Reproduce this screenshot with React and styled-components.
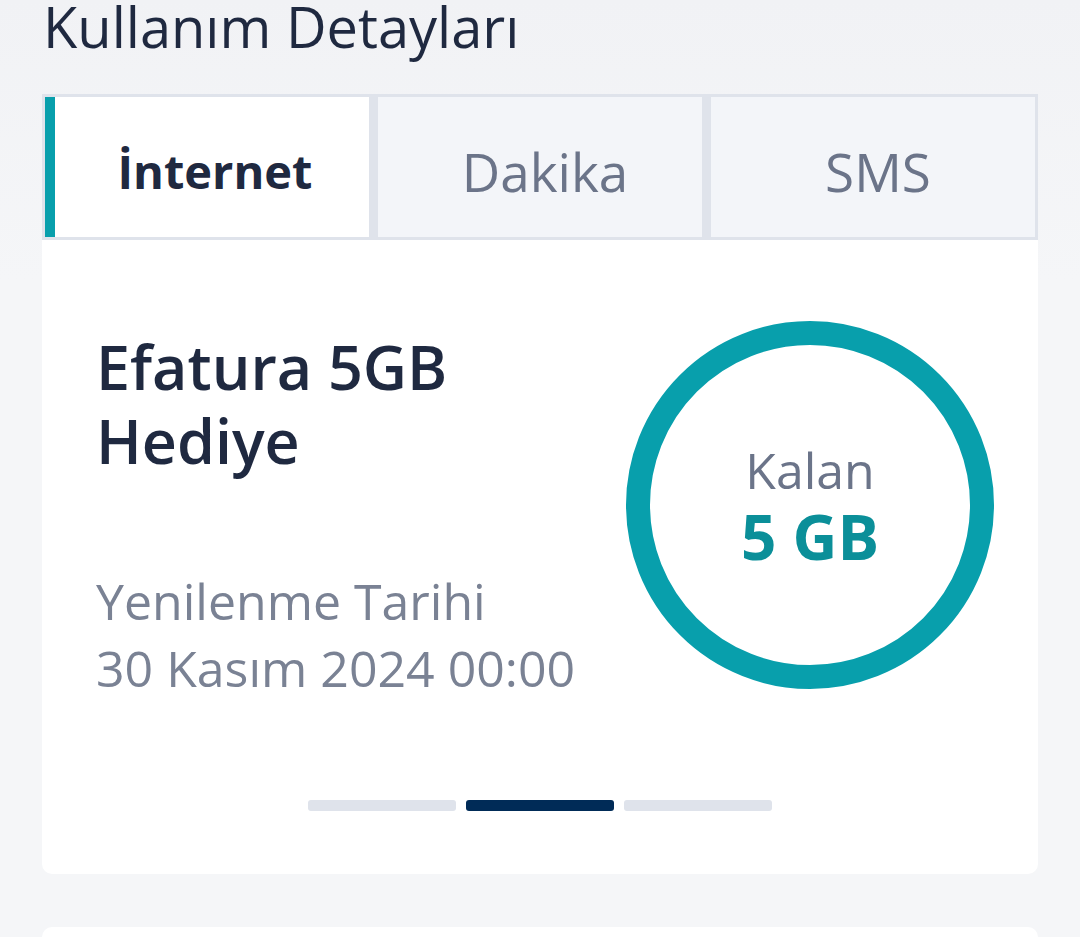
import styled, { createGlobalStyle } from "styled-components"

const GlobalStyle = createGlobalStyle`
  html, body {
    margin: 0;
    padding: 0;
    background: #f5f6f8;
    font-family: "Open Sans", "Noto Sans", sans-serif;
  }
  * { box-sizing: border-box; }
`;

const tabs = ["İnternet", "Dakika", "SMS"];

export default function App() {
    return (
        <>
            <GlobalStyle />
            <Page>
                <Title>Kullanım Detayları</Title>
                <TabBar>
                    {tabs.map((t, i) => (
                        <Tab key={t} active={i === 0}>{t}</Tab>
                    ))}
                </TabBar>
                <Card>
                    <CardBody>
                        <Info>
                            <PackName>Efatura 5GB<br />Hediye</PackName>
                            <Renewal>Yenilenme Tarihi<br />30 Kasım 2024 00:00</Renewal>
                        </Info>
                        <Ring>
                            <RingLabel>Kalan</RingLabel>
                            <RingValue>5 GB</RingValue>
                        </Ring>
                    </CardBody>
                    <Dots>
                        <Dot />
                        <Dot active />
                        <Dot />
                    </Dots>
                </Card>
                <NextCard />
            </Page>
        </>
    )
};

const Page = styled.div`
    height: 937px;
    overflow: hidden;
    padding: 0 42px;
    background: linear-gradient(180deg, #f1f2f5 0%, #f5f6f8 30%);
`;

const Title = styled.h1`
    margin: 0;
    padding-left: 1px;
    height: 94px;
    font-size: 56px;
    line-height: 52px;
    font-weight: 400;
    color: #1f2940;
`;

const TabBar = styled.div`
    display: grid;
    grid-template-columns: 1fr 1fr 1fr;
    gap: 9px;
    padding: 3px;
    background: #dfe3eb;
    height: 146px;
`;

const Tab = styled.div`
    display: flex;
    align-items: center;
    justify-content: center;
    background: ${p => p.active ? "#ffffff" : "#f3f5f9"};
    border-left: ${p => p.active ? "10px solid #089fac" : "none"};
    color: ${p => p.active ? "#1f2940" : "#6b7489"};
    font-size: ${p => p.active ? "47px" : "53px"};
    font-weight: ${p => p.active ? 700 : 400};
    padding-top: 8px;
    padding-left: ${p => p.active ? "6px" : "10px"};
`;

const Card = styled.div`
    background: #ffffff;
    height: 634px;
    border-radius: 0 0 10px 10px;
    padding: 80px 44px 0 54px;
`;

const CardBody = styled.div`
    display: flex;
    justify-content: space-between;
    align-items: flex-start;
`;

const Info = styled.div`
    display: flex;
    flex-direction: column;
    gap: 90px;
    padding-top: 10px;
`;

const PackName = styled.div`
    font-size: 61px;
    line-height: 74px;
    font-weight: 600;
    color: #1f2940;
`;

const Renewal = styled.div`
    font-size: 50px;
    line-height: 67px;
    color: #7a8294;
`;

const Ring = styled.div`
    width: 368px;
    height: 368px;
    margin-top: 1px;
    border-radius: 50%;
    border: 24px solid #089fac;
    display: flex;
    flex-direction: column;
    align-items: center;
    justify-content: center;
    padding-bottom: 6px;
`;

const RingLabel = styled.div`
    font-size: 50px;
    line-height: 68px;
    color: #6b7489;
`;

const RingValue = styled.div`
    font-size: 62px;
    line-height: 64px;
    font-weight: 700;
    color: #0b8f99;
`;

const Dots = styled.div`
    display: flex;
    justify-content: center;
    gap: 10px;
    margin-top: 98px;
    padding-right: 10px;
`;

const Dot = styled.div`
    width: 148px;
    height: 11px;
    border-radius: 3px;
    background: ${p => p.active ? "#002b57" : "#dfe3eb"};
`;

const NextCard = styled.div`
    background: #ffffff;
    height: 60px;
    margin-top: 53px;
    border-radius: 10px 10px 0 0;
`;
